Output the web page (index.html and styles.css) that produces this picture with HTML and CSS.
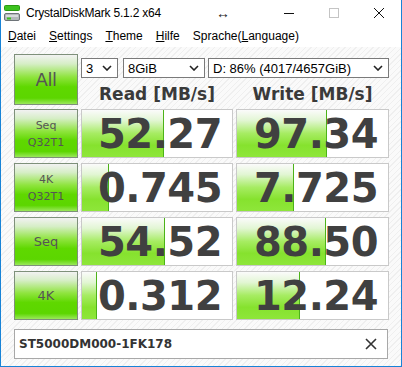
FILE: index.html
```html
<!DOCTYPE html>
<html lang="de">
<head>
    <meta charset="UTF-8">
    <title>CrystalDiskMark 5.1.2 x64</title>
    <link rel="stylesheet" href="styles.css">
</head>
<body>
<div class="window">
    <div class="titlebar">
        <svg class="app-icon" width="16" height="16" viewBox="0 0 16 16">
            <rect x="0.5" y="0.5" width="15" height="5" rx="1" fill="#3cc21e" stroke="#2a9a12"/>
            <rect x="0.5" y="8.5" width="15" height="7" rx="1.5" fill="#b4b8bc" stroke="#6d7378"/>
            <rect x="2" y="10" width="12" height="2" fill="#d8dbde"/>
            <rect x="3" y="12.5" width="4" height="2" fill="#3cc21e"/>
        </svg>
        <span class="title">CrystalDiskMark 5.1.2 x64</span>
        <span class="resize">&#8596;</span>
        <div class="controls">
            <svg width="10" height="10" viewBox="0 0 10 10"><path d="M0 5.5h10" stroke="#111" stroke-width="1"/></svg>
            <svg width="10" height="10" viewBox="0 0 10 10"><rect x="0.5" y="0.5" width="9" height="9" fill="none" stroke="#c4c4c4"/></svg>
            <svg width="10" height="10" viewBox="0 0 10 10"><path d="M0 0L10 10M10 0L0 10" stroke="#111" stroke-width="1"/></svg>
        </div>
    </div>

    <div class="menubar">
        <span><u>D</u>atei</span>
        <span><u>S</u>ettings</span>
        <span><u>T</u>heme</span>
        <span><u>H</u>ilfe</span>
        <span>Sprache(<u>L</u>anguage)</span>
    </div>

    <div class="client">
        <div class="bench">
            <div class="btn btn-all">All</div>
            <div class="top">
                <div class="selects">
                    <div class="select sel-count">3<svg class="chev" viewBox="0 0 10 6"><path d="M1 1l4 4 4-4" fill="none" stroke="#222" stroke-width="1.6"/></svg></div>
                    <div class="select sel-size">8GiB<svg class="chev" viewBox="0 0 10 6"><path d="M1 1l4 4 4-4" fill="none" stroke="#222" stroke-width="1.6"/></svg></div>
                    <div class="select sel-drive">D: 86% (4017/4657GiB)<svg class="chev" viewBox="0 0 10 6"><path d="M1 1l4 4 4-4" fill="none" stroke="#222" stroke-width="1.6"/></svg></div>
                </div>
                <div class="head">Read [MB/s]</div>
                <div class="head">Write [MB/s]</div>
            </div>

            <div class="btn">Seq<br>Q32T1</div>
            <div class="val"><div class="fill" style="width:81px"></div><span>52.27</span></div>
            <div class="val"><div class="fill" style="width:89px"></div><span>97.34</span></div>

            <div class="btn">4K<br>Q32T1</div>
            <div class="val"><div class="fill" style="width:26px"></div><span>0.745</span></div>
            <div class="val"><div class="fill" style="width:56px"></div><span>7.725</span></div>

            <div class="btn btn-big">Seq</div>
            <div class="val"><div class="fill" style="width:82px"></div><span>54.52</span></div>
            <div class="val"><div class="fill" style="width:88px"></div><span>88.50</span></div>

            <div class="btn btn-big">4K</div>
            <div class="val"><div class="fill" style="width:14px"></div><span>0.312</span></div>
            <div class="val"><div class="fill" style="width:62px"></div><span>12.24</span></div>
        </div>

        <div class="comment">
            <span>ST5000DM000-1FK178</span>
            <svg width="12" height="12" viewBox="0 0 12 12"><path d="M1 1L11 11M11 1L1 11" stroke="#333" stroke-width="1.6"/></svg>
        </div>
    </div>
</div>
</body>
</html>
```

FILE: styles.css
```css
html, body {
    margin: 0;
    padding: 0;
    background: #fff;
}
.window {
    width: 402px;
    height: 367px;
    box-sizing: border-box;
    border: 1px solid #1883d7;
    border-top: none;
    font-family: "Liberation Sans", Arial, sans-serif;
    color: #000;
    display: flex;
    flex-direction: column;
}
.titlebar {
    height: 25px;
    display: flex;
    align-items: center;
    padding-left: 3px;
    background: #fff;
}
.app-icon {
    margin-right: 6px;
}
.title {
    font-size: 12px;
    letter-spacing: -0.2px;
}
.resize {
    margin-left: 55px;
    font-size: 14px;
    font-weight: bold;
    color: #222;
}
.controls {
    margin-left: auto;
    display: flex;
    gap: 35px;
    padding-right: 17px;
}
.menubar {
    height: 22px;
    display: flex;
    align-items: center;
    font-size: 12px;
    padding-left: 7px;
    background: #fff;
}
.menubar span {
    margin-right: 13px;
}
.client {
    flex: 1;
    padding: 7px 13px 0 13px;
    background: repeating-linear-gradient(135deg, #fafafa 0, #fafafa 3px, #efefef 3px, #efefef 4px);
}
.bench {
    display: grid;
    grid-template-columns: 64px 152px 153px;
    grid-template-rows: 50px 49px 49px 49px 49px;
    column-gap: 3px;
    row-gap: 5px;
    margin-bottom: 9px;
}
.bench .btn-all {
    margin-bottom: -1px;
}
.btn {
    box-sizing: border-box;
    border: 1px solid #7e907a;
    background: linear-gradient(#f2f2f2 0%, #d6eec6 18%, #8fe43e 45%, #5fd800 65%, #5cd600 88%, #9ae85a 100%);
    color: #555;
    font-family: "DejaVu Sans", sans-serif;
    font-size: 11px;
    line-height: 17px;
    text-align: center;
    display: flex;
    align-items: center;
    justify-content: center;
}
.btn-all {
    font-size: 18px;
    letter-spacing: -0.5px;
}
.btn-big {
    font-size: 13px;
}
.top {
    grid-column: 2 / 4;
    display: grid;
    grid-template-columns: 152px 153px;
    column-gap: 3px;
    grid-template-rows: 20px 1fr;
    padding-top: 4px;
}
.selects {
    grid-column: 1 / 3;
    display: flex;
    gap: 5px;
}
.select {
    box-sizing: border-box;
    height: 20px;
    border: 1px solid #7a7a7a;
    background: #fff;
    font-size: 13px;
    padding-left: 4px;
    display: flex;
    align-items: center;
    justify-content: space-between;
}
.sel-count {
    width: 37px;
}
.sel-size {
    width: 82px;
}
.sel-drive {
    width: 181px;
    margin-left: -2px;
}
.chev {
    width: 10px;
    height: 6px;
    margin-right: 5px;
}
.head {
    font-family: "DejaVu Sans", sans-serif;
    font-weight: bold;
    font-size: 17px;
    color: #3a3a3a;
    text-align: center;
    padding-top: 6px;
}
.val {
    position: relative;
    box-sizing: border-box;
    border: 1px solid #c9c9c9;
    background: #fff;
    display: flex;
    align-items: center;
    justify-content: flex-end;
    padding-right: 10px;
    overflow: hidden;
}
.fill {
    position: absolute;
    left: 0;
    top: 0;
    bottom: 0;
    border-right: 1px solid #4cb318;
    background: linear-gradient(#fbfbfb 0%, #e2f6d4 22%, #a6ec62 50%, #86e22e 75%, #8ee63a 100%);
}
.val span {
    position: relative;
    font-family: "DejaVu Sans", sans-serif;
    font-weight: bold;
    font-size: 40px;
    color: #404040;
    letter-spacing: -0.5px;
}
.comment {
    box-sizing: border-box;
    height: 30px;
    border: 1px solid #a8a8a8;
    background: #fff;
    display: flex;
    align-items: center;
    justify-content: space-between;
    padding: 0 10px 0 4px;
}
.comment span {
    font-family: "DejaVu Sans", sans-serif;
    font-weight: bold;
    font-size: 12px;
    color: #333;
}
```
